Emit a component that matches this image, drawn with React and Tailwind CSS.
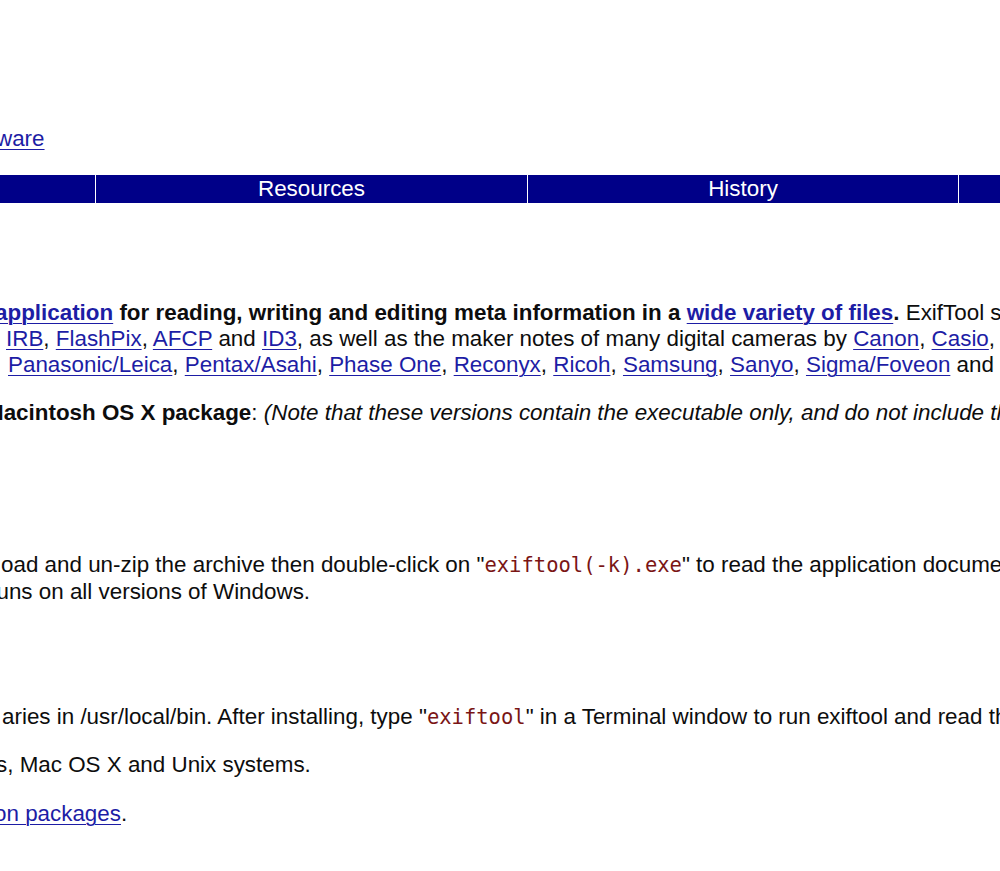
const link = 'text-[#1d1da5] underline underline-offset-[3px] decoration-1';
const code = 'font-["DejaVu_Sans_Mono","Liberation_Mono",monospace] text-[20.5px] text-[#7a1515]';

function NavBar() {
    const cells = [
        { label: '', width: 'w-[95px]' },
        { label: 'Resources', width: 'w-[431px]' },
        { label: 'History', width: 'w-[430px]' },
        { label: '', width: 'flex-1' },
    ];
    return (
        <div className="flex gap-px h-[28px] bg-white">
            {cells.map((c, i) => (
                <div key={i} className={`${c.width} shrink-0 bg-[#000088] text-white flex items-center justify-center`}>
                    {c.label}
                </div>
            ))}
        </div>
    );
}

export default function App() {
    return (
        <div className="w-[1000px] h-[871px] overflow-hidden bg-white text-[#0d0d0d] text-[22.4px] leading-[26px] font-['Liberation_Sans',Arial,sans-serif] whitespace-nowrap">
            <div className="pt-[126px]">
                <div className="ml-[-4px]">
                    <a className={link}>ware</a>
                </div>
            </div>

            <div className="mt-[23px]">
                <NavBar />
            </div>

            <div className="mt-[97px] flex flex-col">
                <div className="ml-[-5px]">
                    <b>
                        <a className={link}>application</a> for reading, writing and editing meta information in a{' '}
                        <a className={link}>wide variety of files</a>.
                    </b>{' '}
                    ExifTool supports many different metadata formats including EXIF, GPS, IPTC, XMP, JFIF, GeoTIFF, ICC Profile
                </div>
                <div className="ml-[6px]">
                    <a className={link}>IRB</a>, <a className={link}>FlashPix</a>, <a className={link}>AFCP</a> and{' '}
                    <a className={link}>ID3</a>, as well as the maker notes of many digital cameras by{' '}
                    <a className={link}>Canon</a>, <a className={link}>Casio</a>, <a className={link}>DJI</a>
                </div>
                <div className="ml-[8px]">
                    <a className={link}>Panasonic/Leica</a>, <a className={link}>Pentax/Asahi</a>,{' '}
                    <a className={link}>Phase One</a>, <a className={link}>Reconyx</a>, <a className={link}>Ricoh</a>,{' '}
                    <a className={link}>Samsung</a>, <a className={link}>Sanyo</a>, <a className={link}>Sigma/Foveon</a> and{' '}
                    <a className={link}>Sony</a>.
                </div>
            </div>

            <div className="mt-[22px] ml-[-15px]">
                <b>Macintosh OS X package</b>:{' '}
                <i>(Note that these versions contain the executable only, and do not include the HTML documentation or other files.)</i>
            </div>

            <div className="mt-[126px] flex flex-col">
                <div className="ml-[1px] h-[27px]">
                    oad and un-zip the archive then double-click on "<span className={code}>exiftool(-k).exe</span>" to read the application documentation.
                </div>
                <div className="ml-[-11px]">runs on all versions of Windows.</div>
            </div>

            <div className="mt-[99px]">
                <div className="ml-[2px]">
                    aries in /usr/local/bin. After installing, type "<span className={code}>exiftool</span>" in a Terminal window to run exiftool and read the documentation.
                </div>
            </div>

            <div className="mt-[22px] ml-[-4px]">s, Mac OS X and Unix systems.</div>

            <div className="mt-[23px] ml-[-6px]">
                <a className={link}>on packages</a>.
            </div>
        </div>
    );
}
